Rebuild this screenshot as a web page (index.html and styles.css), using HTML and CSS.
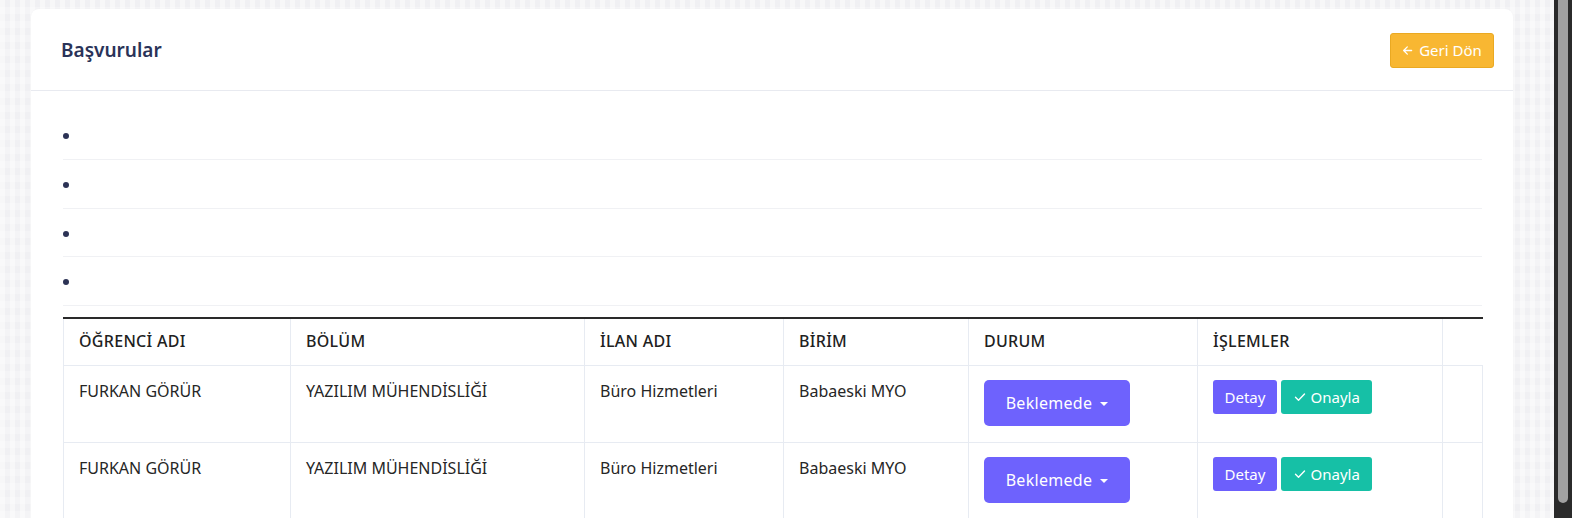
FILE: index.html
```html
<!DOCTYPE html>
<html lang="tr">
<head>
<meta charset="utf-8">
<title>Başvurular</title>
<link rel="stylesheet" href="styles.css">
</head>
<body>
<div class="screen">
  <main class="page">
    <section class="card">
      <header class="card-header">
        <h1 class="card-title">Başvurular</h1>
        <button class="btn btn-back" type="button">
          <svg class="ico" width="11" height="11" viewBox="0 0 12 12" aria-hidden="true"><path d="M10.5 6H1.8M5.8 2L1.8 6l4 4" fill="none" stroke="#fff" stroke-width="1.4" stroke-linecap="round" stroke-linejoin="round"/></svg>
          Geri Dön
        </button>
      </header>
      <div class="card-body">
        <ul class="plain-list">
          <li></li>
          <li></li>
          <li></li>
          <li></li>
        </ul>
        <table class="apps">
          <colgroup>
            <col class="c1"><col class="c2"><col class="c3"><col class="c4"><col class="c5"><col class="c6"><col class="c7">
          </colgroup>
          <thead>
            <tr>
              <th>ÖĞRENCİ ADI</th>
              <th>BÖLÜM</th>
              <th>İLAN ADI</th>
              <th>BİRİM</th>
              <th>DURUM</th>
              <th>İŞLEMLER</th>
              <th class="empty"></th>
            </tr>
          </thead>
          <tbody>
            <tr>
              <td>FURKAN GÖRÜR</td>
              <td>YAZILIM MÜHENDİSLİĞİ</td>
              <td>Büro Hizmetleri</td>
              <td>Babaeski MYO</td>
              <td><button class="btn btn-status" type="button">Beklemede <span class="caret"></span></button></td>
              <td class="actions">
                <button class="btn btn-sm btn-detail" type="button">Detay</button>
                <button class="btn btn-sm btn-approve" type="button"><svg class="ico" width="12" height="10" viewBox="0 0 12 10" aria-hidden="true"><path d="M1.5 5.2l3 3L10.5 2" fill="none" stroke="#fff" stroke-width="1.4" stroke-linecap="round" stroke-linejoin="round"/></svg> Onayla</button>
              </td>
              <td></td>
            </tr>
            <tr>
              <td>FURKAN GÖRÜR</td>
              <td>YAZILIM MÜHENDİSLİĞİ</td>
              <td>Büro Hizmetleri</td>
              <td>Babaeski MYO</td>
              <td><button class="btn btn-status" type="button">Beklemede <span class="caret"></span></button></td>
              <td class="actions">
                <button class="btn btn-sm btn-detail" type="button">Detay</button>
                <button class="btn btn-sm btn-approve" type="button"><svg class="ico" width="12" height="10" viewBox="0 0 12 10" aria-hidden="true"><path d="M1.5 5.2l3 3L10.5 2" fill="none" stroke="#fff" stroke-width="1.4" stroke-linecap="round" stroke-linejoin="round"/></svg> Onayla</button>
              </td>
              <td></td>
            </tr>
          </tbody>
        </table>
      </div>
    </section>
  </main>
  <div class="scrollbar"><div class="thumb"></div></div>
</div>
</body>
</html>
```

FILE: styles.css
```css
* { box-sizing: border-box; }
html, body { margin: 0; padding: 0; height: 100%; overflow: hidden; }
body {
  font-family: "Noto Sans", "Open Sans", sans-serif;
  font-size: 16px;
  color: #2b2b2b;
}
.screen {
  display: flex;
  height: 518px;
  width: 1572px;
}
.page {
  flex: 1;
  background-color: #f4f4f6;
  background-image:
    linear-gradient(90deg, rgba(255,255,255,0.45) 50%, transparent 50%),
    linear-gradient(rgba(232,232,235,0.3) 50%, transparent 50%);
  background-size: 10px 10px, 14px 14px;
  padding: 9px 41px 0 31px;
  overflow: hidden;
}
.scrollbar {
  width: 18px;
  background: #2b2b2b;
  padding: 0 4px 15px 4px;
  display: flex;
}
.thumb {
  flex: 1;
  background: #a1a1a1;
  border-radius: 0 0 5px 5px;
}
.card {
  background: #fff;
  border-radius: 8px;
  box-shadow: 0 0 2px rgba(0,0,0,0.03);
  min-height: 600px;
}
.card-header {
  display: flex;
  align-items: center;
  justify-content: space-between;
  height: 82px;
  padding: 0 19px 0 30px;
  border-bottom: 1px solid #e8eaf0;
}
.card-title {
  margin: 0;
  font-size: 19px;
  font-weight: 600;
  color: #2a3358;
}
.btn {
  font-family: inherit;
  border: 0;
  color: #fff;
  cursor: pointer;
  display: inline-flex;
  align-items: center;
  justify-content: center;
}
.btn-back {
  height: 35px;
  width: 104px;
  background: #f8b732;
  border: 1px solid #eaa922;
  border-radius: 3px;
  font-size: 15px;
  gap: 6px;
  padding: 0 10px;
  margin-top: 1px;
}
.card-body {
  padding: 20px 31px 0 32px;
}
.plain-list {
  list-style: disc inside;
  margin: 0;
  padding: 0;
  color: #2c3355;
}
.plain-list li {
  height: 48.8px;
  line-height: 48px;
  border-bottom: 1px solid #f0f1f4;
  font-size: 18px;
}
.apps {
  margin-top: 11px;
  width: 100%;
  border-collapse: collapse;
  table-layout: fixed;
}
.c1 { width: 227px; }
.c2 { width: 294px; }
.c3 { width: 199px; }
.c4 { width: 185px; }
.c5 { width: 229px; }
.c6 { width: 245px; }
.c7 { width: 40px; }
.apps th, .apps td {
  border: 1px solid #e7ebf2;
  text-align: left;
  vertical-align: top;
  padding: 14px 15px;
  line-height: 22px;
}
.apps thead th {
  border-top: 2px solid #2a2a2a;
  font-weight: 500;
  color: #212121;
  letter-spacing: 0.3px;
  height: 47px;
  padding: 11px 15px 12px;
}
.apps thead th.empty { border-right: 0; }
.apps td { height: 77px; color: #262626; }
.btn-status {
  height: 46px;
  width: 146px;
  background: #6e62fd;
  border-radius: 5px;
  font-size: 16px;
  letter-spacing: 0.3px;
  gap: 8px;
  padding: 0 18px;
}
.caret {
  width: 0; height: 0;
  border-left: 4px solid transparent;
  border-right: 4px solid transparent;
  border-top: 4px solid #fff;
  margin-top: 2px;
}
.actions { white-space: nowrap; }
.btn-sm {
  height: 34px;
  border-radius: 3px;
  font-size: 15px;
  padding: 0 10px;
  vertical-align: top;
}
.btn-detail { background: #6c5ffc; width: 64px; }
.btn-approve { background: #16c0a6; width: 91px; gap: 5px; }
```
